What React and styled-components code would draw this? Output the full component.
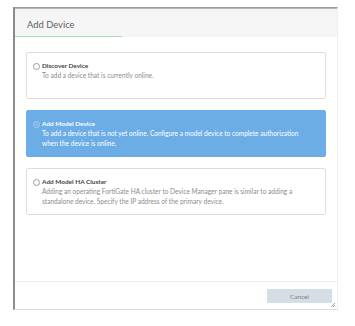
import styled, { createGlobalStyle, css } from "styled-components";

const GlobalStyle = createGlobalStyle`
  html, body {
    margin: 0;
    background: #ffffff;
    font-family: Lato, "Open Sans", "Liberation Sans", sans-serif;
  }
`;

const Page = styled.div`
  padding: 7px 0 0 13px;
`;

const Dialog = styled.div`
  width: 325px;
  height: 303px;
  box-sizing: border-box;
  border-left: 2px solid #8c8c8c;
  border-top: 1px solid #9c9c9c;
  border-bottom: 1px solid #dcdcdc;
  border-right: 1px solid #f0f0f0;
  display: flex;
  flex-direction: column;
  position: relative;
`;

const Header = styled.div`
  height: 28px;
  background: #f5f5f5;
  display: flex;
  border-top: 1px solid #b5b5b5;
`;

const TitleTab = styled.div`
  width: 107px;
  box-sizing: border-box;
  padding: 4px 0 0 12px;
  display: flex;
  align-items: center;
  font-size: 9.4px;
  color: #5f5f5f;
  border-bottom: 1px solid #a9dbb0;
`;

const Body = styled.div`
  flex: 1;
  padding: 15px 11px 0 11px;
  display: flex;
  flex-direction: column;
  gap: 11px;
`;

const Card = styled.div`
  height: 47px;
  box-sizing: border-box;
  border: 1px solid #dddddd;
  border-radius: 2px;
  padding: 8px 8px 0 6px;
  display: grid;
  grid-template-columns: 9px 1fr;
  background: #ffffff;
  ${(p) =>
    p.active &&
    css`
      background: #6cade6;
      border-color: #6cade6;
    `}
`;

const Radio = styled.span`
  width: 5px;
  height: 5px;
  margin-top: 1.5px;
  border-radius: 50%;
  border: 0.8px solid #9a9a9a;
  background: #ffffff;
  ${(p) =>
    p.checked &&
    css`
      border-color: #a9cdf0;
      background: #8fc0ee;
      box-shadow: inset 0 0 0 1.2px #6cade6;
    `}
`;

const Texts = styled.div`
  display: flex;
  flex-direction: column;
`;

const CardTitle = styled.div`
  font-size: 6.45px;
  font-weight: 700;
  line-height: 9px;
  color: ${(p) => (p.active ? "#ffffff" : "#444444")};
`;

const CardText = styled.div`
  margin-top: 1px;
  font-size: 6.55px;
  line-height: 10px;
  color: ${(p) => (p.active ? "#ffffff" : "#8c8c8c")};
`;

const Footer = styled.div`
  height: 28px;
  border-top: 1px solid #eeeeee;
  display: flex;
  justify-content: flex-end;
  align-items: flex-start;
  padding: 7px 5px 0 0;
  box-sizing: border-box;
`;

const CancelButton = styled.button`
  width: 65px;
  height: 14px;
  border: none;
  border-radius: 1px;
  background: #d6dee5;
  color: #7c8288;
  font-family: inherit;
  font-size: 6.4px;
  padding: 0;
  cursor: pointer;
`;

const Grip = styled.svg`
  position: absolute;
  right: 2px;
  bottom: 2px;
`;

const options = [
  {
    title: "Discover Device",
    text: ["To add a device that is currently online."],
  },
  {
    title: "Add Model Device",
    text: [
      "To add a device that is not yet online. Configure a model device to complete authorization",
      "when the device is online.",
    ],
    active: true,
  },
  {
    title: "Add Model HA Cluster",
    text: [
      "Adding an operating FortiGate HA cluster to Device Manager pane is similar to adding a",
      "standalone device. Specify the IP address of the primary device.",
    ],
  },
];

export default function App() {
  return (
    <>
      <GlobalStyle />
      <Page>
        <Dialog>
          <Header>
            <TitleTab>Add Device</TitleTab>
          </Header>
          <Body>
            {options.map((o) => (
              <Card key={o.title} active={o.active}>
                <Radio checked={o.active} />
                <Texts>
                  <CardTitle active={o.active}>{o.title}</CardTitle>
                  <CardText active={o.active}>
                    {o.text.map((line) => (
                      <div key={line}>{line}</div>
                    ))}
                  </CardText>
                </Texts>
              </Card>
            ))}
          </Body>
          <Footer>
            <CancelButton>Cancel</CancelButton>
          </Footer>
          <Grip width="5" height="5" viewBox="0 0 5 5">
            <path d="M1 5 L5 1 M3 5 L5 3" stroke="#888" strokeWidth="0.8" />
          </Grip>
        </Dialog>
      </Page>
    </>
  );
}
